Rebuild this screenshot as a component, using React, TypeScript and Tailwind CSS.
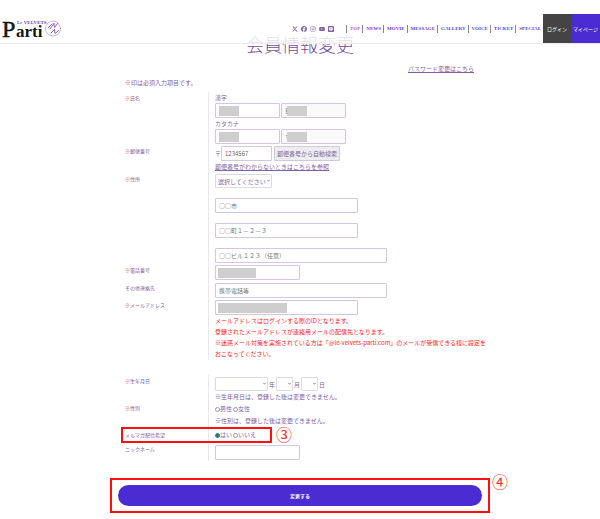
import type { ReactNode } from "react";
import { FaFacebook, FaInstagram, FaLine, FaXTwitter, FaYoutube } from "react-icons/fa6";

const NAV = ["TOP", "NEWS", "MOVIE", "MESSAGE", "GALLERY", "VOICE", "TICKET", "SPECIAL"];

const SOCIAL = [
  { name: "X", Icon: FaXTwitter },
  { name: "Facebook", Icon: FaFacebook },
  { name: "Instagram", Icon: FaInstagram },
  { name: "YouTube", Icon: FaYoutube },
  { name: "LINE", Icon: FaLine },
];

function Logo() {
  return (
    <a href="#" aria-label="Le Velvets Parti" className="ml-0.5 shrink-0">
      <svg viewBox="0 0 60 29" className="h-[29px] w-[60px]">
        <g fontFamily="'Liberation Serif', serif">
          <text x="0" y="23" fontSize="24" fill="#161616" stroke="#161616" strokeWidth="0.5">P</text>
          <text x="14" y="23" fontSize="17" fontWeight="700" fill="#161616">arti</text>
          <text x="15" y="10" fontSize="5" fontWeight="700" fill="#7a3fa8">Le VELVETS</text>
        </g>
        <g fill="none" stroke="#8a4fb5" strokeLinecap="round" transform="translate(0 4.500)">
          <circle cx="51" cy="10" r="7.500" strokeWidth="0.600" opacity="0.700" />
          <path d="M46 9.500L50 5.500M48 10.500L52 5M52 5L52.500 9L55.500 5" strokeWidth="0.900" />
          <path d="M49 14.500L52.500 11M52.500 11L53 15L56.500 12" strokeWidth="0.900" />
        </g>
      </svg>
    </a>
  );
}

function Header() {
  return (
    <header className="absolute inset-x-0 top-3.5 z-10 flex h-[29px] items-center bg-white/80 shadow-[0_1px_1px_#ececec]">
      <Logo />
      <div className="ml-auto flex items-center gap-[3px] text-[#84609f]">
        {SOCIAL.map(({ name, Icon }) => (
          <a key={name} href="#" aria-label={name}>
            <Icon className="size-1.5" />
          </a>
        ))}
      </div>
      <nav className="ml-3 flex font-['Liberation_Serif',serif] text-[5px] leading-2 font-bold text-[#5f3ee0]">
        {NAV.map((item) => (
          <a
            key={item}
            href="#"
            className={
              item === "TOP"
                ? "border-l border-[#888] pr-0.5 pl-[3px] text-[#c455d6]"
                : "border-l border-[#888] pr-0.5 pl-[3px]"
            }
          >
            {item}
          </a>
        ))}
      </nav>
      <a href="#" className="flex h-full w-7 items-center justify-center bg-[#444] text-[5px] text-white">
        ログイン
      </a>
      <a href="#" className="flex h-full w-[29px] items-center justify-center bg-[#4b2bd2] text-[5px] text-white">
        マイページ
      </a>
    </header>
  );
}

function Row({ label, htmlFor, required, labelClass = "", className, children }: {
  label: string;
  htmlFor?: string;
  required?: boolean;
  labelClass?: string;
  className: string;
  children: ReactNode;
}) {
  return (
    <div className="grid grid-cols-[83px_1fr]">
      <div className={`text-[5px] leading-3 ${labelClass}`}>
        <label htmlFor={htmlFor}>
          {required && <span className="text-[#ff4a4a]">※</span>}
          {label}
        </label>
      </div>
      <div className={`border-l border-[#e9e6ec] pl-1.5 ${className}`}>{children}</div>
    </div>
  );
}

function Field({ id, width, mask, placeholder, label, tint, defaultValue }: {
  id: string;
  width: string;
  mask?: string;
  placeholder?: string;
  label?: string;
  tint?: boolean;
  defaultValue?: string;
}) {
  return (
    <div className={`relative ${width}`}>
      <input
        id={id}
        aria-label={label}
        placeholder={placeholder}
        defaultValue={defaultValue}
        className={`block h-[15px] w-full rounded-[1px] border border-[#d3c6e2] px-[3px] text-[6px] placeholder:text-[#777] ${tint ? "bg-[#fafafa] text-[#84609f]" : "bg-white text-[#666]"}`}
      />
      {mask && <span className={`absolute top-[3px] h-2.5 bg-[#cecece] ${mask}`} />}
    </div>
  );
}

function Select({ id, label, width, children }: { id: string; label: string; width: string; children?: ReactNode }) {
  return (
    <div className={`relative ${width}`}>
      <select
        id={id}
        aria-label={label}
        className="block h-3.5 w-full appearance-none rounded-[1px] border border-[#dcd9e0] bg-white pl-0.5 text-[6px] text-[#84609f]"
      >
        {children}
      </select>
      <svg viewBox="0 0 4 4" className="pointer-events-none absolute top-[5px] right-0.5 size-[3px]">
        <path d="M0.300 1L2 3L3.700 1" fill="none" stroke="#84609f" strokeWidth="1" />
      </svg>
    </div>
  );
}

function Radio({ name, label, checked }: { name: string; label: string; checked?: boolean }) {
  return (
    <label className="flex items-center">
      <input
        type="radio"
        name={name}
        defaultChecked={checked}
        className="size-[5px] appearance-none rounded-full border border-[#999] bg-white checked:border-[#2c8a8a] checked:bg-[#1f7a80]"
      />
      {label}
    </label>
  );
}

export default function App() {
  return (
    <div className="relative bg-white pt-[34px] pb-1.5 font-['Noto_Sans_CJK_JP',sans-serif] text-[6px] leading-[11px] text-[#84609f]">
      <Header />
      <main className="mx-auto w-full max-w-[380px]">
        <h1 className="text-center text-[18px] leading-5 font-light text-[#74499f]">会員情報変更</h1>
        <p className="mt-[9px] pr-4 text-right">
          <a href="#" className="underline">パスワード変更はこちら</a>
        </p>
        <form onSubmit={(e) => e.preventDefault()}>
          <div className="pl-[15px]">
            <p className="mt-[3px] mb-1">
              <span className="text-[#ff4a4a]">※</span>印は必須入力項目です。
            </p>

            <Row label="氏名" htmlFor="sei" required className="pb-px">
              <p>漢字</p>
              <div className="flex gap-px">
                <Field id="sei" width="w-[65px]" mask="left-1 w-5" label="姓" />
                <Field id="mei" width="w-[65px]" mask="left-1.5 w-5" label="名" defaultValue="目" tint />
              </div>
              <p>カタカナ</p>
              <div className="flex gap-px">
                <Field id="sei-kana" width="w-[65px]" mask="left-1 w-5" label="セイ" />
                <Field id="mei-kana" width="w-[65px]" mask="left-1.5 w-5" label="メイ" defaultValue="マ" tint />
              </div>
            </Row>

            <Row label="郵便番号" htmlFor="zip" required className="pt-px">
              <div className="flex items-center">
                <span>〒</span>
                <Field id="zip" width="w-[51px]" defaultValue="1234567" />
                <button type="button" className="ml-0.5 h-[15px] rounded-[1px] border border-[#d3c6e2] bg-[#ededf0] px-0.5">
                  郵便番号から自動検索
                </button>
              </div>
              <p>
                <a href="#" className="underline">郵便番号がわからないときはこちらを参照</a>
              </p>
            </Row>

            <Row label="住所" htmlFor="pref" required labelClass="pt-px" className="flex flex-col gap-2.5 pt-0.5 pb-px">
              <Select id="pref" label="都道府県" width="w-[57px]">
                <option>選択してください</option>
              </Select>
              <Field id="city" width="w-[143px]" label="市区町村" placeholder="○○市" />
              <Field id="street" width="w-[143px]" label="番地" placeholder="○○町１－２－３" />
              <Field id="building" width="w-[172px]" label="建物名" placeholder="○○ビル１２３（任意）" />
            </Row>

            <Row label="電話番号" htmlFor="tel" required className="py-px">
              <Field id="tel" width="w-[85px]" mask="left-[3px] w-[38px]" />
            </Row>

            <Row label="その他連絡先" htmlFor="other" labelClass="pt-px" className="pt-0.5 pb-px">
              <Field id="other" width="w-[172px]" placeholder="携帯電話等" />
            </Row>

            <Row label="メールアドレス" htmlFor="mail" required className="py-px">
              <Field id="mail" width="w-[143px]" mask="left-[3px] w-[69px]" />
              <div className="whitespace-nowrap text-[#ff1a1a]">
                <p>メールアドレスはログインする際のIDとなります。</p>
                <p>登録されたメールアドレスが連絡用メールの配信先となります。</p>
                <p>
                  ※迷惑メール対策を実施されている方は「@le-velvets-parti.com」のメールが受信できる様に設定を
                  <br />
                  おこなってください。
                </p>
              </div>
            </Row>

            <div className="mt-[15px]">
              <Row label="生年月日" htmlFor="year" required className="pt-0.5">
                <div className="flex items-center gap-px">
                  <Select id="year" label="年" width="w-[53px]" />
                  <span>年</span>
                  <Select id="month" label="月" width="w-[17px]" />
                  <span>月</span>
                  <Select id="day" label="日" width="w-[17px]" />
                  <span>日</span>
                </div>
                <p>※生年月日は、登録した後は変更できません。</p>
              </Row>

              <Row label="性別" required className="pt-px leading-3">
                <div className="flex gap-px">
                  <Radio name="gender" label="男性" />
                  <Radio name="gender" label="女性" />
                </div>
                <p>※性別は、登録した後は変更できません。</p>
              </Row>

              <div className="relative">
                <Row label="メルマガ配信希望" labelClass="pt-0.5" className="py-0.5 leading-3">
                  <div className="flex gap-px">
                    <Radio name="magazine" label="はい" checked />
                    <Radio name="magazine" label="いいえ" />
                  </div>
                </Row>
                <div className="pointer-events-none absolute inset-y-0 -left-1 w-[151px] border-2 border-[#ff1010]" />
                <span className="absolute top-0 left-[151px] text-[16px] leading-[14px] text-[#ff2a2a]">③</span>
              </div>

              <Row label="ニックネーム" htmlFor="nick" className="pt-0.5 pb-px">
                <Field id="nick" width="w-[85px]" />
              </Row>
            </div>
          </div>

          <div className="relative mt-[17px] border-2 border-[#ff1010] px-1.5 py-[5px]">
            <button type="submit" className="block h-[21px] w-full rounded-full bg-[#4b2bd2] text-[5px] font-bold text-white">
              変更する
            </button>
            <span className="absolute -top-1.5 left-full ml-1 text-[16px] leading-[14px] text-[#ff2a2a]">④</span>
          </div>
        </form>
      </main>
    </div>
  );
}
